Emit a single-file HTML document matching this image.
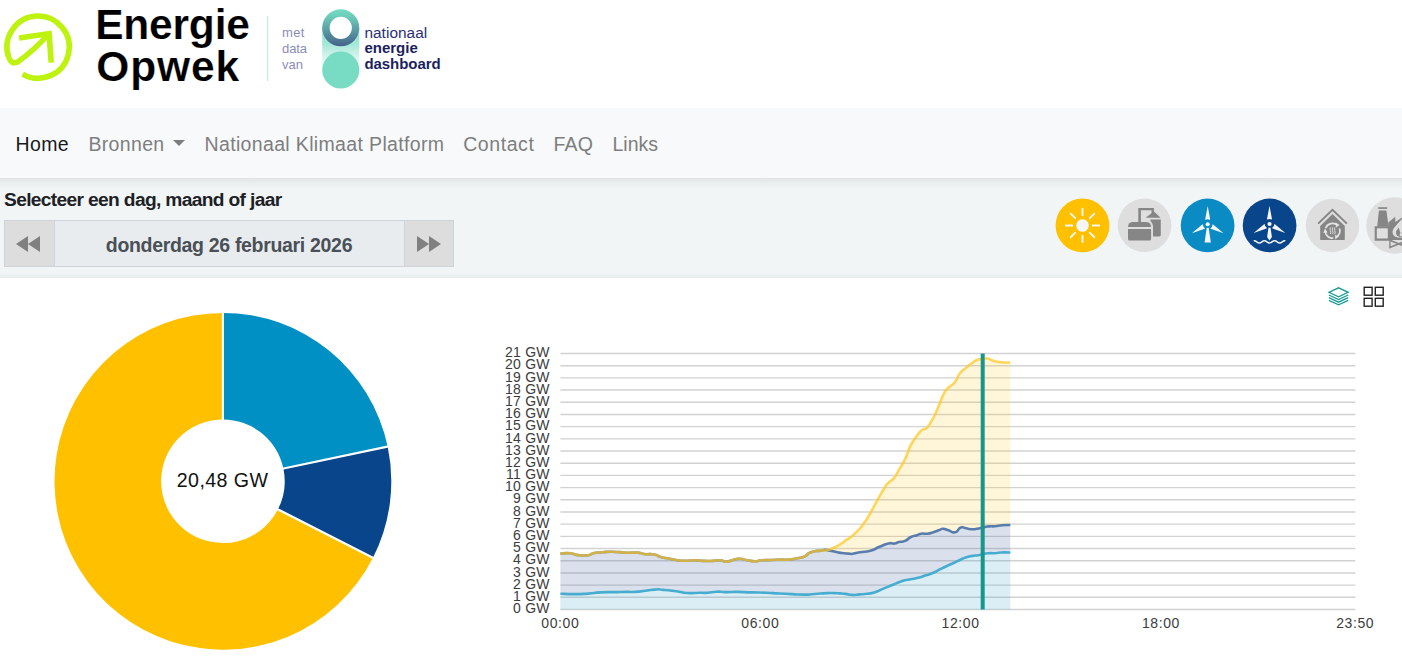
<!DOCTYPE html>
<html lang="nl"><head><meta charset="utf-8"><title>Energie Opwek</title>
<style>
html,body{margin:0;padding:0}
body{width:1402px;height:667px;overflow:hidden;background:#fff;position:relative;font-family:"Liberation Sans",sans-serif;color:#212529}
.abs{position:absolute}
svg text{font-family:"Liberation Sans",sans-serif}
#nav{left:0;top:108px;width:1402px;height:70px;background:#f8f9fa;z-index:2}
#nav a{position:absolute;top:24px;font-size:19.5px;line-height:24px;color:#7d7e7f;text-decoration:none;white-space:nowrap}
#nav a.act{color:#191a1b}
#sel{left:0;top:178px;width:1402px;height:100px;background:linear-gradient(to bottom,rgba(0,0,0,.07) 0,rgba(0,0,0,.035) 4px,rgba(0,0,0,.012) 8px,rgba(0,0,0,0) 12px,rgba(0,0,0,0) 94px,rgba(0,0,0,.035) 100px),#f1f5f6;z-index:1}
#sel h5{position:absolute;left:4px;top:10px;margin:0;font-size:19.2px;line-height:24px;font-weight:bold;color:#1d2125;letter-spacing:-0.66px;white-space:nowrap}
#dg{position:absolute;left:4px;top:42px;width:450px;height:47px;box-sizing:border-box;border:1px solid #ced4da;background:#e9ecef}
#dg .b{position:absolute;top:0;width:48.5px;height:45px;background:#dddddd}
#dg .b.l{left:0;border-right:1px solid #ced4da}
#dg .b.r{right:0;border-left:1px solid #ced4da}
#dg .t{position:absolute;left:49px;width:350px;top:11.6px;text-align:center;font-size:19.5px;line-height:24px;font-weight:bold;color:#495057;letter-spacing:-0.32px;white-space:nowrap}
</style></head><body>
<div class="abs" id="hdr" style="left:0;top:0;width:1402px;height:108px;background:#fff"><svg class="abs" style="left:0;top:0" width="470" height="108" viewBox="0 0 470 108">
<defs>
<linearGradient id="ring" x1="0" y1="0" x2="0" y2="1"><stop offset="0" stop-color="#74dcc4"/><stop offset="0.2" stop-color="#6cccb9"/><stop offset="1" stop-color="#45618a"/></linearGradient>
<linearGradient id="pill" x1="0" y1="0" x2="0" y2="1"><stop offset="0" stop-color="#8fe2cf"/><stop offset="0.38" stop-color="#a3e8d7"/><stop offset="0.58" stop-color="#c6f0e6"/><stop offset="0.8" stop-color="#e6f8f3"/><stop offset="1" stop-color="#f3fcfa"/></linearGradient>
</defs>
<path d="M22.6 74.06 A31.1 31.1 0 1 0 8.84 57.63 Q11.2 64.6 17.3 62.2 Q34 50.5 48.6 34" fill="none" stroke="#bef20f" stroke-width="5.6" stroke-linejoin="round"/>
<path d="M19.1 38 L49.1 33.6 L51.2 62.6" fill="none" stroke="#bef20f" stroke-width="5.6" stroke-linejoin="miter"/>
<text x="95.2" y="39.3" font-size="42.5" font-weight="bold" fill="#000" stroke="#fff" stroke-width="0.2" letter-spacing="-0.2">Energie</text>
<text x="96.2" y="81" font-size="42.5" font-weight="bold" fill="#000" stroke="#fff" stroke-width="0.2" letter-spacing="0.9">Opwek</text>
<rect x="266.9" y="16" width="1.3" height="65" fill="#bfeee1"/>
<g font-size="13" fill="#8a8db4"><text x="282" y="37.2" letter-spacing="0.3">met</text><text x="282" y="53.2" letter-spacing="-0.1">data</text><text x="282" y="69">van</text></g>
<rect x="322.2" y="27.8" width="37.1" height="42.2" fill="url(#pill)"/>
<circle cx="340.75" cy="70" r="18.55" fill="#78dcc4"/>
<circle cx="340.75" cy="27.8" r="12" fill="#fff"/>
<path d="M340.75 9.25a18.55 18.55 0 1 0 0 37.1a18.55 18.55 0 1 0 0 -37.1ZM340.75 16.7a11.1 11.1 0 1 1 0 22.2a11.1 11.1 0 1 1 0 -22.2Z" fill="url(#ring)" fill-rule="evenodd"/>
<g font-size="15" fill="#1b1f5e"><text x="364.4" y="38.1" fill="#2b3076" font-size="15.4" letter-spacing="0.05">nationaal</text><text x="364.4" y="52.8" font-weight="bold">energie</text><text x="364.4" y="68.5" font-weight="bold" letter-spacing="-0.05">dashboard</text></g>
</svg>
</div>
<div class="abs" id="nav">
<a class="act" style="left:15.4px;letter-spacing:.43px">Home</a>
<a style="left:88.4px;letter-spacing:.35px">Bronnen</a>
<svg class="abs" style="left:173px;top:32px" width="12" height="6" viewBox="0 0 12 6"><path d="M0 0H12L6 6Z" fill="#7d7e7f"/></svg>
<a style="left:204.5px;letter-spacing:.35px">Nationaal Klimaat Platform</a>
<a style="left:463.2px;letter-spacing:.57px">Contact</a>
<a style="left:553.5px;letter-spacing:.15px">FAQ</a>
<a style="left:612.5px">Links</a>
</div>
<div class="abs" id="sel">
<h5>Selecteer een dag, maand of jaar</h5>
<div id="dg"><div class="b l"><svg class="abs" style="left:11px;top:15px" width="24" height="16" viewBox="0 0 24 16"><path d="M12 0V16L0 8ZM24 0V16L12 8Z" fill="#808080"/></svg></div><div class="t">donderdag 26 februari 2026</div><div class="b r"><svg class="abs" style="left:12px;top:15px" width="24" height="16" viewBox="0 0 24 16"><path d="M0 0V16L12 8ZM12 0V16L24 8Z" fill="#808080"/></svg></div></div>
<svg class="abs" style="left:1050px;top:12px" width="352" height="70" viewBox="1050 190 352 70">
<!-- sun -->
<circle cx="1082.5" cy="225.45" r="26.9" fill="#ffc000"/>
<g stroke="#f4f6f7" stroke-width="1.9" stroke-linecap="round" fill="#f4f6f7">
<circle cx="1082.5" cy="225.45" r="6.3" stroke="none"/>
<path d="M1082.5 215.2V208.8M1082.5 235.7V242.1M1072.25 225.45H1065.85M1092.75 225.45H1099.15M1075.25 218.2L1070.7 213.65M1089.75 218.2L1094.3 213.65M1075.25 232.7L1070.7 237.25M1089.75 232.7L1094.3 237.25"/>
</g>
<!-- biogas -->
<circle cx="1144.6" cy="225.3" r="26.8" fill="#dedede"/>
<g fill="#868686">
<path d="M1138.3 222.6V208H1153.9V213.5H1151.5V210.3H1140.9V222.6Z"/>
<path d="M1153.9 211.6L1160.6 217.8H1145.6Z"/>
<path d="M1150.4 219.6H1160.8V235A1.4 1.4 0 0 1 1159.4 236.4H1153V226A6.4 6.4 0 0 0 1150.4 221Z"/>
<path d="M1128 227V226.9A5 5 0 0 1 1133 221.9H1146.1A5 5 0 0 1 1151.1 226.9V227Z"/>
<path d="M1128 228.9H1151.1V239A1.5 1.5 0 0 1 1149.6 240.5H1129.5A1.5 1.5 0 0 1 1128 239Z"/>
</g>
<!-- wind -->
<circle cx="1207.6" cy="225.45" r="26.85" fill="#0a8bc4"/>
<g transform="translate(1207.7 224.25)" fill="#f4f6f7">
<path d="M-1 3.4H1L3.15 18.3H-3.15Z"/>
<circle r="3.5" fill="#0a8bc4"/>
<circle r="2.05"/>
<path d="M0 -18.2L-2.4 -5.6L-2.3 -4.2A4.2 4.2 0 0 1 2.3 -4.2L2.4 -5.6Z"/>
<path d="M0 -18.2L-2.4 -5.6L-2.3 -4.2A4.2 4.2 0 0 1 2.3 -4.2L2.4 -5.6Z" transform="rotate(119.5)"/>
<path d="M0 -18.2L-2.4 -5.6L-2.3 -4.2A4.2 4.2 0 0 1 2.3 -4.2L2.4 -5.6Z" transform="rotate(-119.5)"/>
</g>
<!-- wind at sea -->
<circle cx="1269.6" cy="225.45" r="26.85" fill="#09458b"/>
<g transform="translate(1269.5 224)" fill="#f4f6f7">
<path d="M-1 3.4H1L2.4 13L0 16.6L-2.4 13Z"/>
<circle r="3.5" fill="#09458b"/>
<circle r="2.05"/>
<path d="M0 -18.2L-2.4 -5.6L-2.3 -4.2A4.2 4.2 0 0 1 2.3 -4.2L2.4 -5.6Z"/>
<path d="M0 -18.2L-2.4 -5.6L-2.3 -4.2A4.2 4.2 0 0 1 2.3 -4.2L2.4 -5.6Z" transform="rotate(119.5)"/>
<path d="M0 -18.2L-2.4 -5.6L-2.3 -4.2A4.2 4.2 0 0 1 2.3 -4.2L2.4 -5.6Z" transform="rotate(-119.5)"/>
<path d="M-15.3 16.8C-12.75 16.8 -12.75 18.9 -10.2 18.9S-7.65 16.8 -5.1 16.8S-2.55 18.9 0 18.9S2.55 16.8 5.1 16.8S7.65 18.9 10.2 18.9S12.75 16.8 15.3 16.8" fill="none" stroke="#f4f6f7" stroke-width="1.5" stroke-linecap="round"/>
</g>
<!-- heat pump house -->
<circle cx="1332.5" cy="225.4" r="26.75" fill="#dedede"/>
<path d="M1318.1 223.6L1332.5 209.9L1346.9 223.6" fill="none" stroke="#868686" stroke-width="2"/>
<path d="M1332.5 214L1344.8 226.1V239.2A.9 .9 0 0 1 1343.9 240.1H1321.1A.9 .9 0 0 1 1320.2 239.2V226.1Z" fill="#868686"/>
<g fill="none" stroke="#e3e3e3" stroke-width="1.7">
<path d="M1325.6 228.2A7.4 7.4 0 0 1 1337.4 225.2"/>
<path d="M1339.5 228.6A7.4 7.4 0 0 1 1336.6 236.9"/>
<path d="M1333.3 238.1A7.4 7.4 0 0 1 1325.2 232.2"/>
</g>
<g fill="#e3e3e3"><path d="M1335.6 222.6L1339.6 225L1336 227.6Z"/><path d="M1338.9 236.3L1335.4 239.6L1334.9 235Z"/><path d="M1323.2 233L1325 228.6L1327.6 232.6Z"/></g>
<path d="M1330.4 227.3q-.7 1.7 0 3.4t0 3.4M1332.6 227.3q-.7 1.7 0 3.4t0 3.4M1334.8 227.3q-.7 1.7 0 3.4t0 3.4" fill="none" stroke="#e3e3e3" stroke-width="0.9"/>
<!-- gas plant -->
<circle cx="1394.4" cy="225.5" r="28.2" fill="#dedede"/>
<g fill="#868686">
<rect x="1378.2" y="207.2" width="8.9" height="1.7"/>
<path d="M1378.9 210.6H1386.4L1388.6 226.7H1377.2Z"/>
<path d="M1388.3 222.4L1395.3 216.8V222L1402 217.6V240H1388.3Z"/>
<path d="M1374.7 226.2H1389.6V240.7H1374.7ZM1376.9 228.6V238.3H1387.6V228.6Z" fill-rule="evenodd"/>
<path d="M1389.4 239.2L1402 244.2V246L1389.4 241ZM1389.4 246.8L1402 241.8V243.6L1389.4 248.6ZM1389.2 239.2H1390.6V248.6H1389.2Z"/>
</g>
<rect x="1376.9" y="228.6" width="10.7" height="9.7" fill="#e0e0e0"/>
<path d="M1402 219Q1397.5 223.5 1395.5 226.2Q1392 230 1392.6 233Q1393.3 237 1398 237.4L1402 237.6Z" fill="#e0e0e0"/>
<path d="M1398.6 227.6Q1395.8 230.6 1396.1 233.6Q1396.5 236.5 1399.4 236.7L1402 236.7V233.2Q1400.6 233.4 1399.8 231.4Q1399.4 229.4 1398.6 227.6Z" fill="#868686"/>
<path d="M1400.6 232.6Q1399.2 234.2 1399.8 235.4Q1400.4 236.2 1402 236.1V234Q1401 233.6 1400.6 232.6Z" fill="#e0e0e0"/>
</svg>

</div>
<svg class="abs" style="left:0;top:0" width="1402" height="667" viewBox="0 0 1402 667">
<g><path d="M222.90 312.90 A168.4 168.4 0 0 1 387.68 446.58 L283.37 468.56 A61.8 61.8 0 0 0 222.90 419.50 Z" fill="#0090c4"/><path d="M387.68 446.58 A168.4 168.4 0 0 1 372.95 557.75 L277.96 509.36 A61.8 61.8 0 0 0 283.37 468.56 Z" fill="#09458b"/><path d="M372.95 557.75 A168.4 168.4 0 1 1 222.90 312.90 L222.90 419.50 A61.8 61.8 0 1 0 277.96 509.36 Z" fill="#ffc000"/></g><g stroke="#fff" stroke-width="2.2"><line x1="222.90" y1="420.50" x2="222.90" y2="311.90"/><line x1="282.39" y1="468.76" x2="388.66" y2="446.37"/><line x1="277.07" y1="508.90" x2="373.84" y2="558.21"/></g>
<text x="222.6" y="487.2" text-anchor="middle" font-size="19.6" fill="#111" letter-spacing="0.45">20,48 GW</text>
<g stroke="#d2d2d2" stroke-width="1.4"><line x1="560.4" x2="1355.3" y1="609.50" y2="609.50"/><line x1="560.4" x2="1355.3" y1="597.31" y2="597.31"/><line x1="560.4" x2="1355.3" y1="585.12" y2="585.12"/><line x1="560.4" x2="1355.3" y1="572.93" y2="572.93"/><line x1="560.4" x2="1355.3" y1="560.74" y2="560.74"/><line x1="560.4" x2="1355.3" y1="548.55" y2="548.55"/><line x1="560.4" x2="1355.3" y1="536.36" y2="536.36"/><line x1="560.4" x2="1355.3" y1="524.17" y2="524.17"/><line x1="560.4" x2="1355.3" y1="511.98" y2="511.98"/><line x1="560.4" x2="1355.3" y1="499.79" y2="499.79"/><line x1="560.4" x2="1355.3" y1="487.60" y2="487.60"/><line x1="560.4" x2="1355.3" y1="475.40" y2="475.40"/><line x1="560.4" x2="1355.3" y1="463.21" y2="463.21"/><line x1="560.4" x2="1355.3" y1="451.02" y2="451.02"/><line x1="560.4" x2="1355.3" y1="438.83" y2="438.83"/><line x1="560.4" x2="1355.3" y1="426.64" y2="426.64"/><line x1="560.4" x2="1355.3" y1="414.45" y2="414.45"/><line x1="560.4" x2="1355.3" y1="402.26" y2="402.26"/><line x1="560.4" x2="1355.3" y1="390.07" y2="390.07"/><line x1="560.4" x2="1355.3" y1="377.88" y2="377.88"/><line x1="560.4" x2="1355.3" y1="365.69" y2="365.69"/><line x1="560.4" x2="1355.3" y1="353.50" y2="353.50"/></g>
<path d="M560.4 593.7 C565.0 593.8 564.9 594.1 574.1 594.1 C583.3 594.1 579.2 594.2 588.1 593.6 C597.0 593.0 591.5 592.9 600.9 592.4 C610.3 591.9 607.7 592.3 616.2 592.1 C624.7 591.9 618.8 592.1 626.4 591.9 C634.0 591.7 629.8 592.4 639.1 591.6 C648.4 590.8 646.3 590.2 654.4 589.6 C662.5 589.0 656.1 589.4 663.3 589.9 C670.5 590.4 668.0 590.2 676.1 591.2 C684.2 592.2 679.5 592.5 687.5 593.0 C695.5 593.5 693.3 592.9 700.0 592.8 C706.7 592.7 702.1 593.1 707.6 592.7 C713.1 592.3 710.6 591.9 716.6 591.7 C722.6 591.5 718.3 592.0 725.5 592.1 C732.7 592.2 729.7 591.8 738.2 591.9 C746.7 592.0 741.6 592.1 751.0 592.4 C760.4 592.7 757.0 592.4 766.3 592.8 C775.6 593.2 770.5 593.1 779.0 593.5 C787.5 593.9 783.3 593.7 791.8 594.1 C800.3 594.5 796.9 594.6 804.5 594.6 C812.1 594.6 807.1 594.5 814.7 594.0 C822.3 593.5 819.8 593.3 827.4 593.1 C835.0 592.9 831.7 593.0 837.6 593.3 C843.5 593.6 840.0 593.4 845.0 593.9 C850.0 594.4 847.5 594.7 852.5 594.9 C857.5 595.1 855.0 594.8 860.0 594.4 C865.0 594.0 862.5 594.4 867.5 593.7 C872.5 593.0 869.5 594.0 875.0 592.2 C880.5 590.4 878.0 590.9 884.0 588.4 C890.0 585.9 887.5 586.9 893.0 584.7 C898.5 582.5 895.5 583.4 900.5 581.7 C905.5 580.0 902.5 580.9 908.0 579.7 C913.5 578.5 911.0 579.5 917.0 578.0 C923.0 576.5 920.5 577.1 926.0 575.3 C931.5 573.5 928.9 574.6 933.4 572.7 C937.9 570.8 935.4 571.7 939.4 569.7 C943.4 567.7 940.9 568.8 945.4 566.7 C949.9 564.6 948.0 565.6 953.0 563.3 C958.0 561.0 955.9 561.7 960.4 559.7 C964.9 557.7 962.4 558.6 966.4 557.3 C970.4 556.0 968.4 556.6 972.4 555.9 C976.4 555.2 974.9 555.8 978.4 555.2 C981.9 554.6 979.5 554.7 983.0 554.0 C986.5 553.3 985.0 553.5 989.0 553.2 C993.0 552.9 991.0 553.4 995.0 553.2 C999.0 553.0 995.9 552.7 1001.0 552.5 C1006.1 552.3 1007.2 552.5 1010.3 552.5 L1010.3 609.5 L560.4 609.5 Z" fill="#3fa7d0" fill-opacity="0.19"/>
<path d="M560.4 553.6 C563.7 553.5 564.5 552.8 570.3 553.3 C576.1 553.8 572.0 554.5 577.9 555.1 C583.8 555.7 583.0 555.8 588.1 555.2 C593.2 554.6 588.5 554.2 593.2 553.2 C597.9 552.2 595.8 552.8 602.2 552.3 C608.6 551.8 604.2 551.6 612.3 551.7 C620.4 551.8 617.9 552.4 626.4 552.7 C634.9 553.0 631.9 552.2 637.8 552.6 C643.7 553.0 638.7 553.4 644.2 554.0 C649.7 554.6 648.9 553.5 654.4 554.5 C659.9 555.5 655.7 555.6 660.8 557.0 C665.9 558.4 664.2 557.6 669.7 558.7 C675.2 559.8 671.8 559.5 677.3 560.2 C682.8 560.9 681.2 560.8 686.3 560.8 C691.4 560.8 688.0 560.3 692.6 560.2 C697.2 560.1 694.1 560.3 700.0 560.6 C705.9 560.9 703.4 561.1 710.2 561.0 C717.0 560.9 714.9 560.0 720.4 560.2 C725.9 560.4 720.9 562.1 726.8 561.6 C732.7 561.1 731.8 559.3 738.2 558.8 C744.6 558.3 740.4 559.2 745.9 560.0 C751.4 560.8 749.7 561.2 754.8 561.3 C759.9 561.4 755.7 560.7 761.2 560.3 C766.7 559.9 764.6 560.2 771.4 560.0 C778.2 559.8 775.7 559.7 781.6 559.6 C787.5 559.5 784.1 560.0 789.2 559.6 C794.3 559.2 791.8 559.3 796.9 558.3 C802.0 557.3 799.8 558.5 804.5 556.5 C809.2 554.5 805.4 554.3 810.9 552.3 C816.4 550.3 815.6 551.3 821.1 550.6 C826.6 549.9 821.9 549.5 827.4 550.1 C832.9 550.7 832.1 551.2 837.6 552.3 C843.1 553.4 839.9 552.8 844.0 553.3 C848.1 553.8 847.2 553.6 850.0 553.7 C852.8 553.8 849.2 554.2 852.5 553.7 C855.8 553.2 854.0 553.2 860.0 552.2 C866.0 551.2 864.0 552.5 870.5 550.7 C877.0 548.9 873.5 549.2 879.5 546.8 C885.5 544.4 883.5 544.6 888.5 543.5 C893.5 542.4 891.0 544.0 894.5 543.5 C898.0 543.0 895.5 542.9 899.0 542.0 C902.5 541.1 901.0 542.6 905.0 540.9 C909.0 539.2 907.0 538.9 911.0 537.0 C915.0 535.1 913.5 536.3 917.0 535.2 C920.5 534.1 917.9 534.2 921.4 533.7 C924.9 533.2 923.4 534.2 927.4 533.7 C931.4 533.2 929.4 533.4 933.4 532.2 C937.4 531.0 936.1 531.1 939.4 530.0 C942.7 528.9 940.2 528.7 943.2 528.8 C946.2 528.9 944.4 529.2 948.4 530.3 C952.4 531.4 951.2 533.1 955.2 532.2 C959.2 531.3 957.1 529.1 960.4 527.7 C963.7 526.3 961.5 527.5 965.0 528.0 C968.5 528.5 967.0 528.9 971.0 529.2 C975.0 529.5 973.0 529.4 977.0 528.8 C981.0 528.2 979.0 528.1 983.0 527.3 C987.0 526.5 985.0 526.8 989.0 526.4 C993.0 526.0 990.5 526.6 995.0 526.2 C999.5 525.8 997.3 525.6 1002.4 525.2 C1007.5 524.8 1007.7 525.1 1010.3 525.0 L1010.3 552.5 C1007.2 552.5 1006.1 552.3 1001.0 552.5 C995.9 552.7 999.0 553.0 995.0 553.2 C991.0 553.4 993.0 552.9 989.0 553.2 C985.0 553.5 986.5 553.3 983.0 554.0 C979.5 554.7 981.9 554.6 978.4 555.2 C974.9 555.8 976.4 555.2 972.4 555.9 C968.4 556.6 970.4 556.0 966.4 557.3 C962.4 558.6 964.9 557.7 960.4 559.7 C955.9 561.7 958.0 561.0 953.0 563.3 C948.0 565.6 949.9 564.6 945.4 566.7 C940.9 568.8 943.4 567.7 939.4 569.7 C935.4 571.7 937.9 570.8 933.4 572.7 C928.9 574.6 931.5 573.5 926.0 575.3 C920.5 577.1 923.0 576.5 917.0 578.0 C911.0 579.5 913.5 578.5 908.0 579.7 C902.5 580.9 905.5 580.0 900.5 581.7 C895.5 583.4 898.5 582.5 893.0 584.7 C887.5 586.9 890.0 585.9 884.0 588.4 C878.0 590.9 880.5 590.4 875.0 592.2 C869.5 594.0 872.5 593.0 867.5 593.7 C862.5 594.4 865.0 594.0 860.0 594.4 C855.0 594.8 857.5 595.1 852.5 594.9 C847.5 594.7 850.0 594.4 845.0 593.9 C840.0 593.4 843.5 593.6 837.6 593.3 C831.7 593.0 835.0 592.9 827.4 593.1 C819.8 593.3 822.3 593.5 814.7 594.0 C807.1 594.5 812.1 594.6 804.5 594.6 C796.9 594.6 800.3 594.5 791.8 594.1 C783.3 593.7 787.5 593.9 779.0 593.5 C770.5 593.1 775.6 593.2 766.3 592.8 C757.0 592.4 760.4 592.7 751.0 592.4 C741.6 592.1 746.7 592.0 738.2 591.9 C729.7 591.8 732.7 592.2 725.5 592.1 C718.3 592.0 722.6 591.5 716.6 591.7 C710.6 591.9 713.1 592.3 707.6 592.7 C702.1 593.1 706.7 592.7 700.0 592.8 C693.3 592.9 695.5 593.5 687.5 593.0 C679.5 592.5 684.2 592.2 676.1 591.2 C668.0 590.2 670.5 590.4 663.3 589.9 C656.1 589.4 662.5 589.0 654.4 589.6 C646.3 590.2 648.4 590.8 639.1 591.6 C629.8 592.4 634.0 591.7 626.4 591.9 C618.8 592.1 624.7 591.9 616.2 592.1 C607.7 592.3 610.3 591.9 600.9 592.4 C591.5 592.9 597.0 593.0 588.1 593.6 C579.2 594.2 583.3 594.1 574.1 594.1 C564.9 594.1 565.0 593.8 560.4 593.7 Z" fill="#46699f" fill-opacity="0.2"/>
<path d="M827.4 550.1 C830.0 549.1 830.4 549.4 835.1 547.2 C839.8 545.0 837.7 545.9 841.5 543.4 C845.3 540.9 843.8 541.5 846.5 539.7 C849.2 537.9 846.3 540.6 849.5 538.1 C852.7 535.6 851.7 536.7 856.1 532.3 C860.5 527.9 858.3 530.7 862.7 524.9 C867.1 519.1 865.5 521.3 869.3 515.0 C873.1 508.7 870.9 511.9 874.2 505.9 C877.5 499.9 875.9 502.7 879.2 496.9 C882.5 491.1 881.1 493.3 884.1 488.6 C887.1 483.9 885.0 486.4 888.3 482.8 C891.6 479.2 890.4 482.3 894.0 477.9 C897.6 473.5 895.7 475.1 899.0 469.6 C902.3 464.1 901.2 466.6 903.9 461.4 C906.6 456.2 905.3 458.7 907.2 454.0 C909.1 449.3 907.5 452.1 909.7 447.4 C911.9 442.7 911.9 443.2 913.8 440.0 C915.7 436.8 912.9 441.1 915.4 437.9 C917.9 434.7 917.6 433.7 921.4 430.4 C925.2 427.1 923.4 430.9 926.7 427.9 C930.0 424.9 928.5 425.8 931.2 421.4 C933.9 417.0 932.2 420.4 934.9 414.7 C937.6 409.0 936.4 411.2 939.4 404.2 C942.4 397.2 940.9 399.2 943.9 393.7 C946.9 388.2 944.6 391.7 948.4 387.7 C952.2 383.7 951.4 386.4 955.2 381.7 C959.0 377.0 956.0 378.2 959.7 373.5 C963.4 368.8 962.2 371.1 966.4 367.5 C970.6 363.9 968.9 365.2 972.4 362.7 C975.9 360.2 974.2 361.2 976.9 360.0 C979.6 358.8 977.1 359.7 980.6 359.2 C984.1 358.7 983.4 358.1 987.4 358.5 C991.4 358.9 988.1 359.2 992.6 360.4 C997.1 361.6 995.0 361.5 1000.9 362.2 C1006.8 362.9 1007.2 362.4 1010.3 362.5 L1010.3 525.0 C1007.7 525.1 1007.5 524.8 1002.4 525.2 C997.3 525.6 999.5 525.8 995.0 526.2 C990.5 526.6 993.0 526.0 989.0 526.4 C985.0 526.8 987.0 526.5 983.0 527.3 C979.0 528.1 981.0 528.2 977.0 528.8 C973.0 529.4 975.0 529.5 971.0 529.2 C967.0 528.9 968.5 528.5 965.0 528.0 C961.5 527.5 963.7 526.3 960.4 527.7 C957.1 529.1 959.2 531.3 955.2 532.2 C951.2 533.1 952.4 531.4 948.4 530.3 C944.4 529.2 946.2 528.9 943.2 528.8 C940.2 528.7 942.7 528.9 939.4 530.0 C936.1 531.1 937.4 531.0 933.4 532.2 C929.4 533.4 931.4 533.2 927.4 533.7 C923.4 534.2 924.9 533.2 921.4 533.7 C917.9 534.2 920.5 534.1 917.0 535.2 C913.5 536.3 915.0 535.1 911.0 537.0 C907.0 538.9 909.0 539.2 905.0 540.9 C901.0 542.6 902.5 541.1 899.0 542.0 C895.5 542.9 898.0 543.0 894.5 543.5 C891.0 544.0 893.5 542.4 888.5 543.5 C883.5 544.6 885.5 544.4 879.5 546.8 C873.5 549.2 877.0 548.9 870.5 550.7 C864.0 552.5 866.0 551.2 860.0 552.2 C854.0 553.2 855.8 553.2 852.5 553.7 C849.2 554.2 852.8 553.8 850.0 553.7 C847.2 553.6 848.1 553.8 844.0 553.3 C839.9 552.8 843.1 553.4 837.6 552.3 C832.1 551.2 830.8 550.8 827.4 550.1 Z" fill="#ffc832" fill-opacity="0.19"/>
<path d="M560.4 593.7 C565.0 593.8 564.9 594.1 574.1 594.1 C583.3 594.1 579.2 594.2 588.1 593.6 C597.0 593.0 591.5 592.9 600.9 592.4 C610.3 591.9 607.7 592.3 616.2 592.1 C624.7 591.9 618.8 592.1 626.4 591.9 C634.0 591.7 629.8 592.4 639.1 591.6 C648.4 590.8 646.3 590.2 654.4 589.6 C662.5 589.0 656.1 589.4 663.3 589.9 C670.5 590.4 668.0 590.2 676.1 591.2 C684.2 592.2 679.5 592.5 687.5 593.0 C695.5 593.5 693.3 592.9 700.0 592.8 C706.7 592.7 702.1 593.1 707.6 592.7 C713.1 592.3 710.6 591.9 716.6 591.7 C722.6 591.5 718.3 592.0 725.5 592.1 C732.7 592.2 729.7 591.8 738.2 591.9 C746.7 592.0 741.6 592.1 751.0 592.4 C760.4 592.7 757.0 592.4 766.3 592.8 C775.6 593.2 770.5 593.1 779.0 593.5 C787.5 593.9 783.3 593.7 791.8 594.1 C800.3 594.5 796.9 594.6 804.5 594.6 C812.1 594.6 807.1 594.5 814.7 594.0 C822.3 593.5 819.8 593.3 827.4 593.1 C835.0 592.9 831.7 593.0 837.6 593.3 C843.5 593.6 840.0 593.4 845.0 593.9 C850.0 594.4 847.5 594.7 852.5 594.9 C857.5 595.1 855.0 594.8 860.0 594.4 C865.0 594.0 862.5 594.4 867.5 593.7 C872.5 593.0 869.5 594.0 875.0 592.2 C880.5 590.4 878.0 590.9 884.0 588.4 C890.0 585.9 887.5 586.9 893.0 584.7 C898.5 582.5 895.5 583.4 900.5 581.7 C905.5 580.0 902.5 580.9 908.0 579.7 C913.5 578.5 911.0 579.5 917.0 578.0 C923.0 576.5 920.5 577.1 926.0 575.3 C931.5 573.5 928.9 574.6 933.4 572.7 C937.9 570.8 935.4 571.7 939.4 569.7 C943.4 567.7 940.9 568.8 945.4 566.7 C949.9 564.6 948.0 565.6 953.0 563.3 C958.0 561.0 955.9 561.7 960.4 559.7 C964.9 557.7 962.4 558.6 966.4 557.3 C970.4 556.0 968.4 556.6 972.4 555.9 C976.4 555.2 974.9 555.8 978.4 555.2 C981.9 554.6 979.5 554.7 983.0 554.0 C986.5 553.3 985.0 553.5 989.0 553.2 C993.0 552.9 991.0 553.4 995.0 553.2 C999.0 553.0 995.9 552.7 1001.0 552.5 C1006.1 552.3 1007.2 552.5 1010.3 552.5" fill="none" stroke="#46acd0" stroke-width="2.6" stroke-linejoin="round"/>
<path d="M560.4 553.6 C563.7 553.5 564.5 552.8 570.3 553.3 C576.1 553.8 572.0 554.5 577.9 555.1 C583.8 555.7 583.0 555.8 588.1 555.2 C593.2 554.6 588.5 554.2 593.2 553.2 C597.9 552.2 595.8 552.8 602.2 552.3 C608.6 551.8 604.2 551.6 612.3 551.7 C620.4 551.8 617.9 552.4 626.4 552.7 C634.9 553.0 631.9 552.2 637.8 552.6 C643.7 553.0 638.7 553.4 644.2 554.0 C649.7 554.6 648.9 553.5 654.4 554.5 C659.9 555.5 655.7 555.6 660.8 557.0 C665.9 558.4 664.2 557.6 669.7 558.7 C675.2 559.8 671.8 559.5 677.3 560.2 C682.8 560.9 681.2 560.8 686.3 560.8 C691.4 560.8 688.0 560.3 692.6 560.2 C697.2 560.1 694.1 560.3 700.0 560.6 C705.9 560.9 703.4 561.1 710.2 561.0 C717.0 560.9 714.9 560.0 720.4 560.2 C725.9 560.4 720.9 562.1 726.8 561.6 C732.7 561.1 731.8 559.3 738.2 558.8 C744.6 558.3 740.4 559.2 745.9 560.0 C751.4 560.8 749.7 561.2 754.8 561.3 C759.9 561.4 755.7 560.7 761.2 560.3 C766.7 559.9 764.6 560.2 771.4 560.0 C778.2 559.8 775.7 559.7 781.6 559.6 C787.5 559.5 784.1 560.0 789.2 559.6 C794.3 559.2 791.8 559.3 796.9 558.3 C802.0 557.3 799.8 558.5 804.5 556.5 C809.2 554.5 805.4 554.3 810.9 552.3 C816.4 550.3 815.6 551.3 821.1 550.6 C826.6 549.9 821.9 549.5 827.4 550.1 C832.9 550.7 832.1 551.2 837.6 552.3 C843.1 553.4 839.9 552.8 844.0 553.3 C848.1 553.8 847.2 553.6 850.0 553.7 C852.8 553.8 849.2 554.2 852.5 553.7 C855.8 553.2 854.0 553.2 860.0 552.2 C866.0 551.2 864.0 552.5 870.5 550.7 C877.0 548.9 873.5 549.2 879.5 546.8 C885.5 544.4 883.5 544.6 888.5 543.5 C893.5 542.4 891.0 544.0 894.5 543.5 C898.0 543.0 895.5 542.9 899.0 542.0 C902.5 541.1 901.0 542.6 905.0 540.9 C909.0 539.2 907.0 538.9 911.0 537.0 C915.0 535.1 913.5 536.3 917.0 535.2 C920.5 534.1 917.9 534.2 921.4 533.7 C924.9 533.2 923.4 534.2 927.4 533.7 C931.4 533.2 929.4 533.4 933.4 532.2 C937.4 531.0 936.1 531.1 939.4 530.0 C942.7 528.9 940.2 528.7 943.2 528.8 C946.2 528.9 944.4 529.2 948.4 530.3 C952.4 531.4 951.2 533.1 955.2 532.2 C959.2 531.3 957.1 529.1 960.4 527.7 C963.7 526.3 961.5 527.5 965.0 528.0 C968.5 528.5 967.0 528.9 971.0 529.2 C975.0 529.5 973.0 529.4 977.0 528.8 C981.0 528.2 979.0 528.1 983.0 527.3 C987.0 526.5 985.0 526.8 989.0 526.4 C993.0 526.0 990.5 526.6 995.0 526.2 C999.5 525.8 997.3 525.6 1002.4 525.2 C1007.5 524.8 1007.7 525.1 1010.3 525.0" fill="none" stroke="#587cae" stroke-width="2.6" stroke-linejoin="round"/>
<path d="M560.4 553.6 C563.7 553.5 564.5 552.8 570.3 553.3 C576.1 553.8 572.0 554.5 577.9 555.1 C583.8 555.7 583.0 555.8 588.1 555.2 C593.2 554.6 588.5 554.2 593.2 553.2 C597.9 552.2 595.8 552.8 602.2 552.3 C608.6 551.8 604.2 551.6 612.3 551.7 C620.4 551.8 617.9 552.4 626.4 552.7 C634.9 553.0 631.9 552.2 637.8 552.6 C643.7 553.0 638.7 553.4 644.2 554.0 C649.7 554.6 648.9 553.5 654.4 554.5 C659.9 555.5 655.7 555.6 660.8 557.0 C665.9 558.4 664.2 557.6 669.7 558.7 C675.2 559.8 671.8 559.5 677.3 560.2 C682.8 560.9 681.2 560.8 686.3 560.8 C691.4 560.8 688.0 560.3 692.6 560.2 C697.2 560.1 694.1 560.3 700.0 560.6 C705.9 560.9 703.4 561.1 710.2 561.0 C717.0 560.9 714.9 560.0 720.4 560.2 C725.9 560.4 720.9 562.1 726.8 561.6 C732.7 561.1 731.8 559.3 738.2 558.8 C744.6 558.3 740.4 559.2 745.9 560.0 C751.4 560.8 749.7 561.2 754.8 561.3 C759.9 561.4 755.7 560.7 761.2 560.3 C766.7 559.9 764.6 560.2 771.4 560.0 C778.2 559.8 775.7 559.7 781.6 559.6 C787.5 559.5 784.1 560.0 789.2 559.6 C794.3 559.2 791.8 559.3 796.9 558.3 C802.0 557.3 799.8 558.5 804.5 556.5 C809.2 554.5 805.4 554.3 810.9 552.3 C816.4 550.3 815.6 551.3 821.1 550.6 C826.6 549.9 822.7 551.2 827.4 550.1 C832.1 549.0 830.4 549.4 835.1 547.2 C839.8 545.0 837.7 545.9 841.5 543.4 C845.3 540.9 843.8 541.5 846.5 539.7 C849.2 537.9 846.3 540.6 849.5 538.1 C852.7 535.6 851.7 536.7 856.1 532.3 C860.5 527.9 858.3 530.7 862.7 524.9 C867.1 519.1 865.5 521.3 869.3 515.0 C873.1 508.7 870.9 511.9 874.2 505.9 C877.5 499.9 875.9 502.7 879.2 496.9 C882.5 491.1 881.1 493.3 884.1 488.6 C887.1 483.9 885.0 486.4 888.3 482.8 C891.6 479.2 890.4 482.3 894.0 477.9 C897.6 473.5 895.7 475.1 899.0 469.6 C902.3 464.1 901.2 466.6 903.9 461.4 C906.6 456.2 905.3 458.7 907.2 454.0 C909.1 449.3 907.5 452.1 909.7 447.4 C911.9 442.7 911.9 443.2 913.8 440.0 C915.7 436.8 912.9 441.1 915.4 437.9 C917.9 434.7 917.6 433.7 921.4 430.4 C925.2 427.1 923.4 430.9 926.7 427.9 C930.0 424.9 928.5 425.8 931.2 421.4 C933.9 417.0 932.2 420.4 934.9 414.7 C937.6 409.0 936.4 411.2 939.4 404.2 C942.4 397.2 940.9 399.2 943.9 393.7 C946.9 388.2 944.6 391.7 948.4 387.7 C952.2 383.7 951.4 386.4 955.2 381.7 C959.0 377.0 956.0 378.2 959.7 373.5 C963.4 368.8 962.2 371.1 966.4 367.5 C970.6 363.9 968.9 365.2 972.4 362.7 C975.9 360.2 974.2 361.2 976.9 360.0 C979.6 358.8 977.1 359.7 980.6 359.2 C984.1 358.7 983.4 358.1 987.4 358.5 C991.4 358.9 988.1 359.2 992.6 360.4 C997.1 361.6 995.0 361.5 1000.9 362.2 C1006.8 362.9 1007.2 362.4 1010.3 362.5" fill="none" stroke="#ffc823" stroke-opacity="0.72" stroke-width="2.6" stroke-linejoin="round"/>
<rect x="980.7" y="353.5" width="4" height="256" fill="#16968c"/>
<g fill="none" stroke="#1a9c95" stroke-width="1.3" stroke-linejoin="miter"><path d="M1328.9 292.3L1338.55 287.8L1348.2 292.3L1338.55 296.8Z"/><path d="M1328.9 295L1338.55 299.5L1348.2 295M1328.9 297.7L1338.55 302.2L1348.2 297.7M1328.9 300.4L1338.55 304.9L1348.2 300.4"/></g>
<g fill="none" stroke="#222" stroke-width="1.4"><rect x="1364.2" y="287.3" width="7.9" height="7.9"/><rect x="1375.3" y="287.3" width="7.9" height="7.9"/><rect x="1364.2" y="298.3" width="7.9" height="7.9"/><rect x="1375.3" y="298.3" width="7.9" height="7.9"/></g>
<g font-size="14" fill="#3c3c3c" text-anchor="end" letter-spacing="0.25"><text x="549.8" y="613.20">0 GW</text><text x="549.8" y="601.01">1 GW</text><text x="549.8" y="588.82">2 GW</text><text x="549.8" y="576.63">3 GW</text><text x="549.8" y="564.44">4 GW</text><text x="549.8" y="552.25">5 GW</text><text x="549.8" y="540.06">6 GW</text><text x="549.8" y="527.87">7 GW</text><text x="549.8" y="515.68">8 GW</text><text x="549.8" y="503.49">9 GW</text><text x="549.8" y="491.30">10 GW</text><text x="549.8" y="479.10">11 GW</text><text x="549.8" y="466.91">12 GW</text><text x="549.8" y="454.72">13 GW</text><text x="549.8" y="442.53">14 GW</text><text x="549.8" y="430.34">15 GW</text><text x="549.8" y="418.15">16 GW</text><text x="549.8" y="405.96">17 GW</text><text x="549.8" y="393.77">18 GW</text><text x="549.8" y="381.58">19 GW</text><text x="549.8" y="369.39">20 GW</text><text x="549.8" y="357.20">21 GW</text></g>
<g font-size="14" fill="#3c3c3c" text-anchor="middle" letter-spacing="0.6"><text x="560.3" y="627.5">00:00</text><text x="760.3" y="627.5">06:00</text><text x="960.6" y="627.5">12:00</text><text x="1161" y="627.5">18:00</text><text x="1355.2" y="627.5">23:50</text></g>
</svg>
</body></html>
